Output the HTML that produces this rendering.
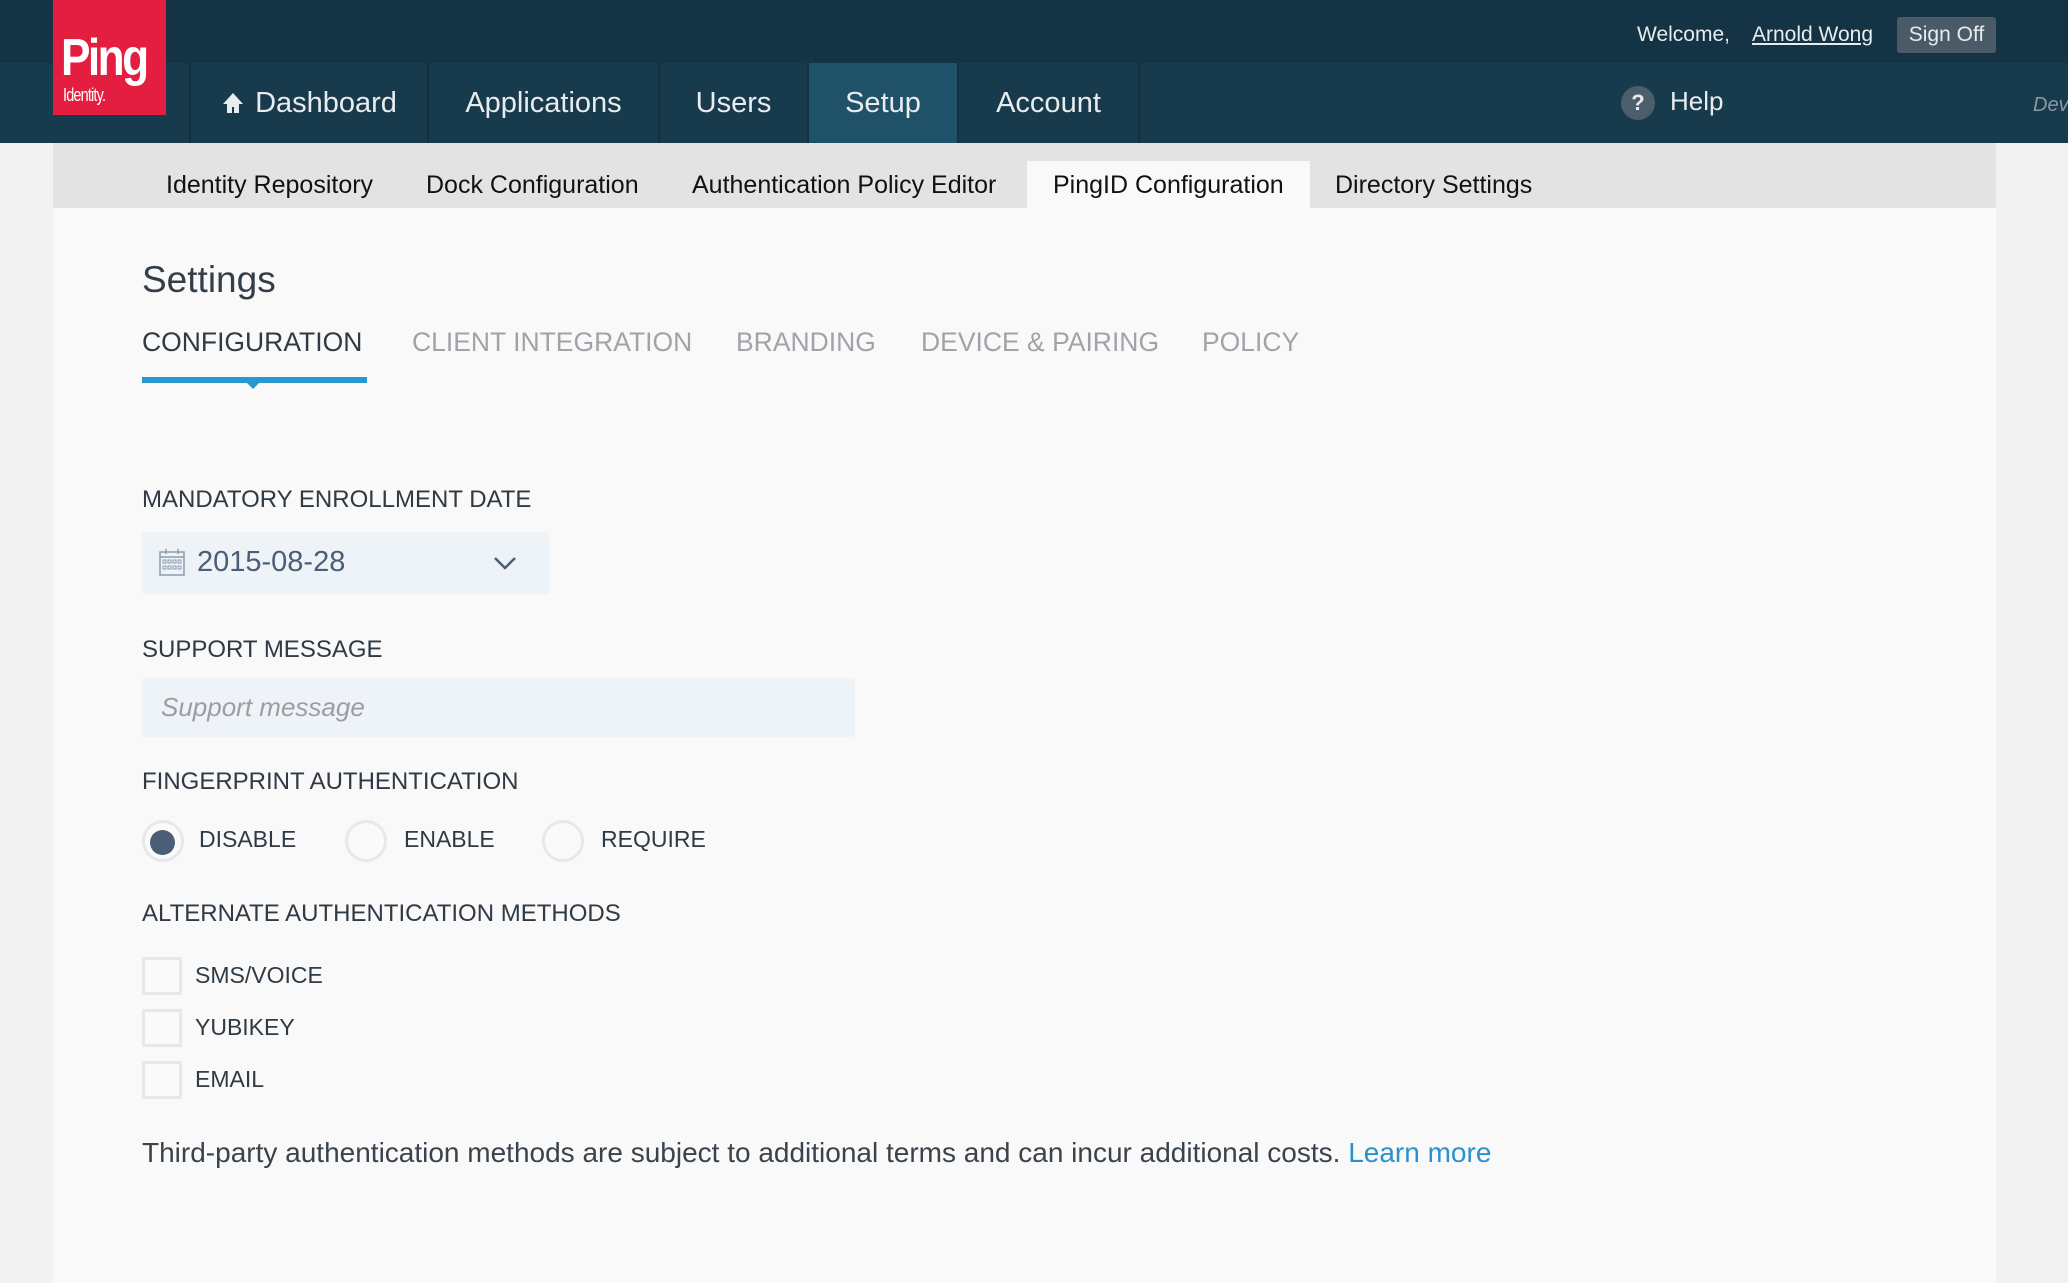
<!DOCTYPE html>
<html><head><meta charset="utf-8"><style>
*{margin:0;padding:0;box-sizing:border-box}
body{width:2068px;height:1283px;background:#f2f2f2;font-family:"Liberation Sans",sans-serif;position:relative;overflow:hidden}
.a{position:absolute;white-space:nowrap}
.top{left:0;top:0;width:2068px;height:63px;background:#143344}
.nav{left:0;top:63px;width:2068px;height:80px;background:#183a4d}
.tab{top:63px;height:80px;color:#e8ecee;font-size:29px;line-height:80px;text-align:center;border-right:2px solid #133041}
.sub{left:53px;top:143px;width:1943px;height:65px;background:#e3e3e3}
.st{top:166px;font-size:25px;color:#111;line-height:38px}
.panel{left:53px;top:208px;width:1943px;height:1075px;background:#f9f9f9}
.lbl{font-size:24px;color:#2f3a44;left:142px}
.tb{font-size:26.5px;top:327px;color:#a0a4a8}
.rad{width:42px;height:42px;border-radius:50%;border:3px solid #e6e8ea;background:#fafafa;top:820px}
.rl{font-size:23px;color:#2f3a44;top:826px}
.cb{left:142px;width:40px;height:38px;border:3px solid #e6e8ea;background:#fafafa}
.cl{left:195px;font-size:23px;color:#2f3a44}
</style></head><body>
<div class="a top"></div>
<div class="a nav"></div>
<div class="a" style="left:53px;top:0;width:113px;height:115px;background:#e41e40;color:#fff">
 <div class="a" style="left:8px;top:32px;font-size:52px;font-weight:bold;letter-spacing:-3px;line-height:52px;transform:scaleX(0.85);transform-origin:left">Ping</div>
 <div class="a" style="left:10px;top:86px;font-size:18px;line-height:18px;letter-spacing:-1px;transform:scaleX(0.8);transform-origin:left">Identity.</div>
</div>
<div class="a tab" style="left:189px;width:240px;border-left:2px solid #133041"><svg width="24" height="24" viewBox="0 0 24 24" style="vertical-align:-3px;margin-right:10px"><path d="M12 2L2 13h4v9h5v-6h2v6h5v-9h4z" fill="#e8ecee"/></svg>Dashboard</div>
<div class="a tab" style="left:429px;width:231px">Applications</div>
<div class="a tab" style="left:660px;width:149px">Users</div>
<div class="a tab" style="left:809px;width:150px;background:#1f5168">Setup</div>
<div class="a tab" style="left:959px;width:181px">Account</div>
<div class="a" style="left:1621px;top:86px;width:34px;height:34px;border-radius:50%;background:#4b5e6a;color:#e8ecee;font-weight:bold;font-size:22px;text-align:center;line-height:34px">?</div>
<div class="a" style="left:1670px;top:86px;font-size:26px;color:#e8ecee">Help</div>
<div class="a" style="left:2033px;top:94px;font-size:20px;color:#8a99a3;font-style:italic">Dev</div>
<div class="a" style="left:1637px;top:23px;font-size:21px;color:#e8ecee">Welcome,</div>
<div class="a" style="left:1752px;top:23px;font-size:21px;color:#e8ecee;text-decoration:underline">Arnold Wong</div>
<div class="a" style="left:1897px;top:17px;width:99px;height:36px;background:#4a5a66;border-radius:3px;color:#e8ecee;font-size:21px;text-align:center;line-height:36px">Sign Off</div>
<div class="a sub"></div>
<div class="a" style="left:1027px;top:161px;width:283px;height:47px;background:#f9f9f9"></div>
<div class="a st" style="left:166px">Identity Repository</div>
<div class="a st" style="left:426px">Dock Configuration</div>
<div class="a st" style="left:692px">Authentication Policy Editor</div>
<div class="a st" style="left:1053px">PingID Configuration</div>
<div class="a st" style="left:1335px">Directory Settings</div>
<div class="a panel"></div>
<div class="a" style="left:142px;top:259px;font-size:37px;color:#333e48">Settings</div>
<div class="a tb" style="left:142px;color:#2f3a44">CONFIGURATION</div>
<div class="a tb" style="left:412px">CLIENT INTEGRATION</div>
<div class="a tb" style="left:736px">BRANDING</div>
<div class="a tb" style="left:921px">DEVICE &amp; PAIRING</div>
<div class="a tb" style="left:1202px">POLICY</div>
<div class="a" style="left:142px;top:377px;width:225px;height:6px;background:#2b97cf"></div>
<div class="a" style="left:246px;top:382px;width:0;height:0;border-left:7px solid transparent;border-right:7px solid transparent;border-top:7px solid #2b97cf"></div>
<div class="a lbl" style="top:486px">MANDATORY ENROLLMENT DATE</div>
<div class="a" style="left:142px;top:532px;width:407px;height:62px;background:#eef3f7;border-radius:3px"></div>
<svg class="a" style="left:159px;top:548px" width="26" height="28" viewBox="0 0 26 28"><rect x="1" y="4" width="24" height="23" fill="none" stroke="#8c9cad" stroke-width="1.5"/><line x1="1" y1="9" x2="25" y2="9" stroke="#8c9cad" stroke-width="1.5"/><line x1="7" y1="1" x2="7" y2="6" stroke="#8c9cad" stroke-width="1.5"/><line x1="19" y1="1" x2="19" y2="6" stroke="#8c9cad" stroke-width="1.5"/><g fill="none" stroke="#8c9cad"><rect x="4" y="12" width="3" height="3"/><rect x="9" y="12" width="3" height="3"/><rect x="14" y="12" width="3" height="3"/><rect x="19" y="12" width="3" height="3"/><rect x="4" y="18" width="3" height="3"/><rect x="9" y="18" width="3" height="3"/><rect x="14" y="18" width="3" height="3"/><rect x="19" y="18" width="3" height="3"/></g></svg>
<div class="a" style="left:197px;top:546px;font-size:29px;color:#4a5e78">2015-08-28</div>
<svg class="a" style="left:493px;top:555px" width="24" height="16" viewBox="0 0 24 16"><path d="M2 3l10 10 10-10" fill="none" stroke="#4a5e78" stroke-width="2.5"/></svg>
<div class="a lbl" style="top:636px">SUPPORT MESSAGE</div>
<div class="a" style="left:142px;top:678px;width:713px;height:59px;background:#eef3f7;border-radius:3px"></div>
<div class="a" style="left:161px;top:692px;font-size:26px;color:#9a9ea3;font-style:italic">Support message</div>
<div class="a lbl" style="top:768px">FINGERPRINT AUTHENTICATION</div>
<div class="a rad" style="left:142px"><div class="a" style="left:5px;top:7px;width:25px;height:25px;border-radius:50%;background:#4a5e78"></div></div>
<div class="a rl" style="left:199px">DISABLE</div>
<div class="a rad" style="left:345px"></div>
<div class="a rl" style="left:404px">ENABLE</div>
<div class="a rad" style="left:542px"></div>
<div class="a rl" style="left:601px">REQUIRE</div>
<div class="a lbl" style="top:900px">ALTERNATE AUTHENTICATION METHODS</div>
<div class="a cb" style="top:957px"></div><div class="a cl" style="top:962px">SMS/VOICE</div>
<div class="a cb" style="top:1009px"></div><div class="a cl" style="top:1014px">YUBIKEY</div>
<div class="a cb" style="top:1061px"></div><div class="a cl" style="top:1066px">EMAIL</div>
<div class="a" style="left:142px;top:1137px;font-size:28px;color:#3a434c">Third-party authentication methods are subject to additional terms and can incur additional costs. <span style="color:#2b91cc">Learn more</span></div>
</body></html>
